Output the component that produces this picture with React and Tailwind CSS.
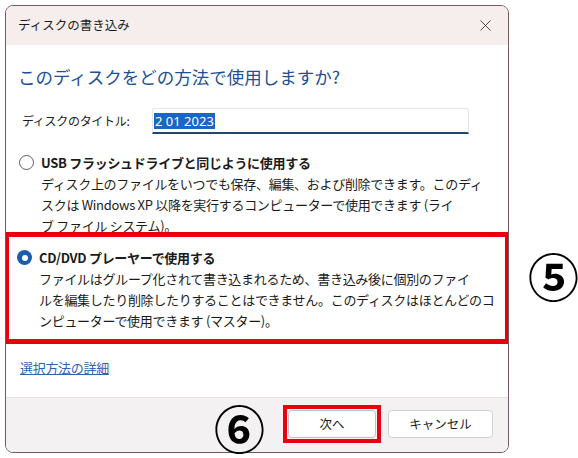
import { X } from 'lucide-react'

const jp = { fontFamily: '"Noto Sans CJK JP", "Noto Sans", sans-serif' }

function Radio({ checked }) {
  if (checked) {
    return (
      <span className="flex h-[15px] w-[15px] shrink-0 items-center justify-center rounded-full bg-[#1a5db0]">
        <span className="h-[6px] w-[6px] rounded-full bg-white" />
      </span>
    )
  }
  return <span className="h-[15px] w-[15px] shrink-0 rounded-full border border-[#5c5c5c] bg-white" />
}

function Option({ checked, title, lines }) {
  return (
    <div className="flex items-start gap-[7px]">
      <div className="flex h-[21px] items-center">
        <Radio checked={checked} />
      </div>
      <div className="text-[13px] leading-[21px] tracking-[-0.3px] text-[#1b1b1b] whitespace-nowrap">
        <div className="font-bold">{title}</div>
        {lines.map((l) => (
          <div key={l}>{l}</div>
        ))}
      </div>
    </div>
  )
}

export default function App() {
  return (
    <div className="relative h-[458px] w-[578px] overflow-hidden bg-white" style={jp}>
      {/* Dialog */}
      <div className="ml-[5px] mt-[5px] flex h-[448px] w-[504px] flex-col overflow-hidden rounded-[8px] border border-[#76585c] bg-white">
        {/* Title bar */}
        <div className="flex h-[39px] shrink-0 items-center justify-between bg-[#f5eeed] pl-[12px] pr-[13px]">
          <span className="text-[12.5px] text-[#1b1b1b]">ディスクの書き込み</span>
          <X size={19} strokeWidth={1.1} className="text-[#333]" />
        </div>

        {/* Content */}
        <div className="flex flex-1 flex-col px-[12px] pt-[20px]">
          <h1 className="text-[17.5px] leading-[24px] text-[#1c4f96]">このディスクをどの方法で使用しますか?</h1>

          <div className="mt-[19px] flex h-[26px] items-center">
            <span className="ml-[4px] w-[130px] text-[12px] tracking-[-0.3px] text-[#1b1b1b]">ディスクのタイトル:</span>
            <div className="flex h-[26px] w-[317px] items-center rounded-t-[3px] border border-b-2 border-[#e6e6e6] border-b-[#21466f] bg-white pl-[1px]">
              <span className="bg-[#1767c9] px-[1px] text-[13px] leading-[16px] text-white" style={{ fontFamily: '"Noto Sans", sans-serif' }}>
                2 01 2023
              </span>
            </div>
          </div>

          <div className="ml-[1px] mt-[18px]">
            <Option
              title="USB フラッシュドライブと同じように使用する"
              lines={[
                'ディスク上のファイルをいつでも保存、編集、および削除できます。このディ',
                'スクは Windows XP 以降を実行するコンピューターで使用できます (ライ',
                'ブ ファイル システム)。',
              ]}
            />
          </div>

          <div className="-mx-[14px] -mt-[4px] h-[112px] border-[5px] border-[#e8000d] pl-[8px] pt-[10px]">
            <Option
              checked
              title="CD/DVD プレーヤーで使用する"
              lines={[
                'ファイルはグループ化されて書き込まれるため、書き込み後に個別のファイ',
                'ルを編集したり削除したりすることはできません。このディスクはほとんどのコ',
                'ンピューターで使用できます (マスター)。',
              ]}
            />
          </div>

          <a className="mt-[14px] ml-[2px] w-fit text-[13px] leading-[20px] tracking-[-0.3px] text-[#2d64ad] underline">
            選択方法の詳細
          </a>
        </div>

        {/* Footer */}
        <div className="flex h-[55px] shrink-0 items-start justify-end gap-[12px] border-t border-[#e6e2e2] bg-[#f3f1f1] pr-[15px] pt-[12px]">
          <div className="relative">
            <button className="h-[28px] w-[88px] rounded-[4px] border border-[#b4c2d2] bg-white text-[12.5px] text-[#1b1b1b]">
              次へ
            </button>
            <span className="pointer-events-none absolute -inset-[5px] border-4 border-[#e8000d]" />
          </div>
          <button className="h-[28px] w-[105px] rounded-[4px] border border-[#d2d2d2] bg-white text-[12.5px] text-[#1b1b1b]">
            キャンセル
          </button>
        </div>
      </div>

      {/* Annotations */}
      <span className="absolute left-[528px] top-[250px] text-[51px] font-bold leading-none text-black">⑤</span>
      <span className="absolute left-[214px] top-[402px] text-[51px] font-bold leading-none text-black">⑥</span>
    </div>
  )
}
